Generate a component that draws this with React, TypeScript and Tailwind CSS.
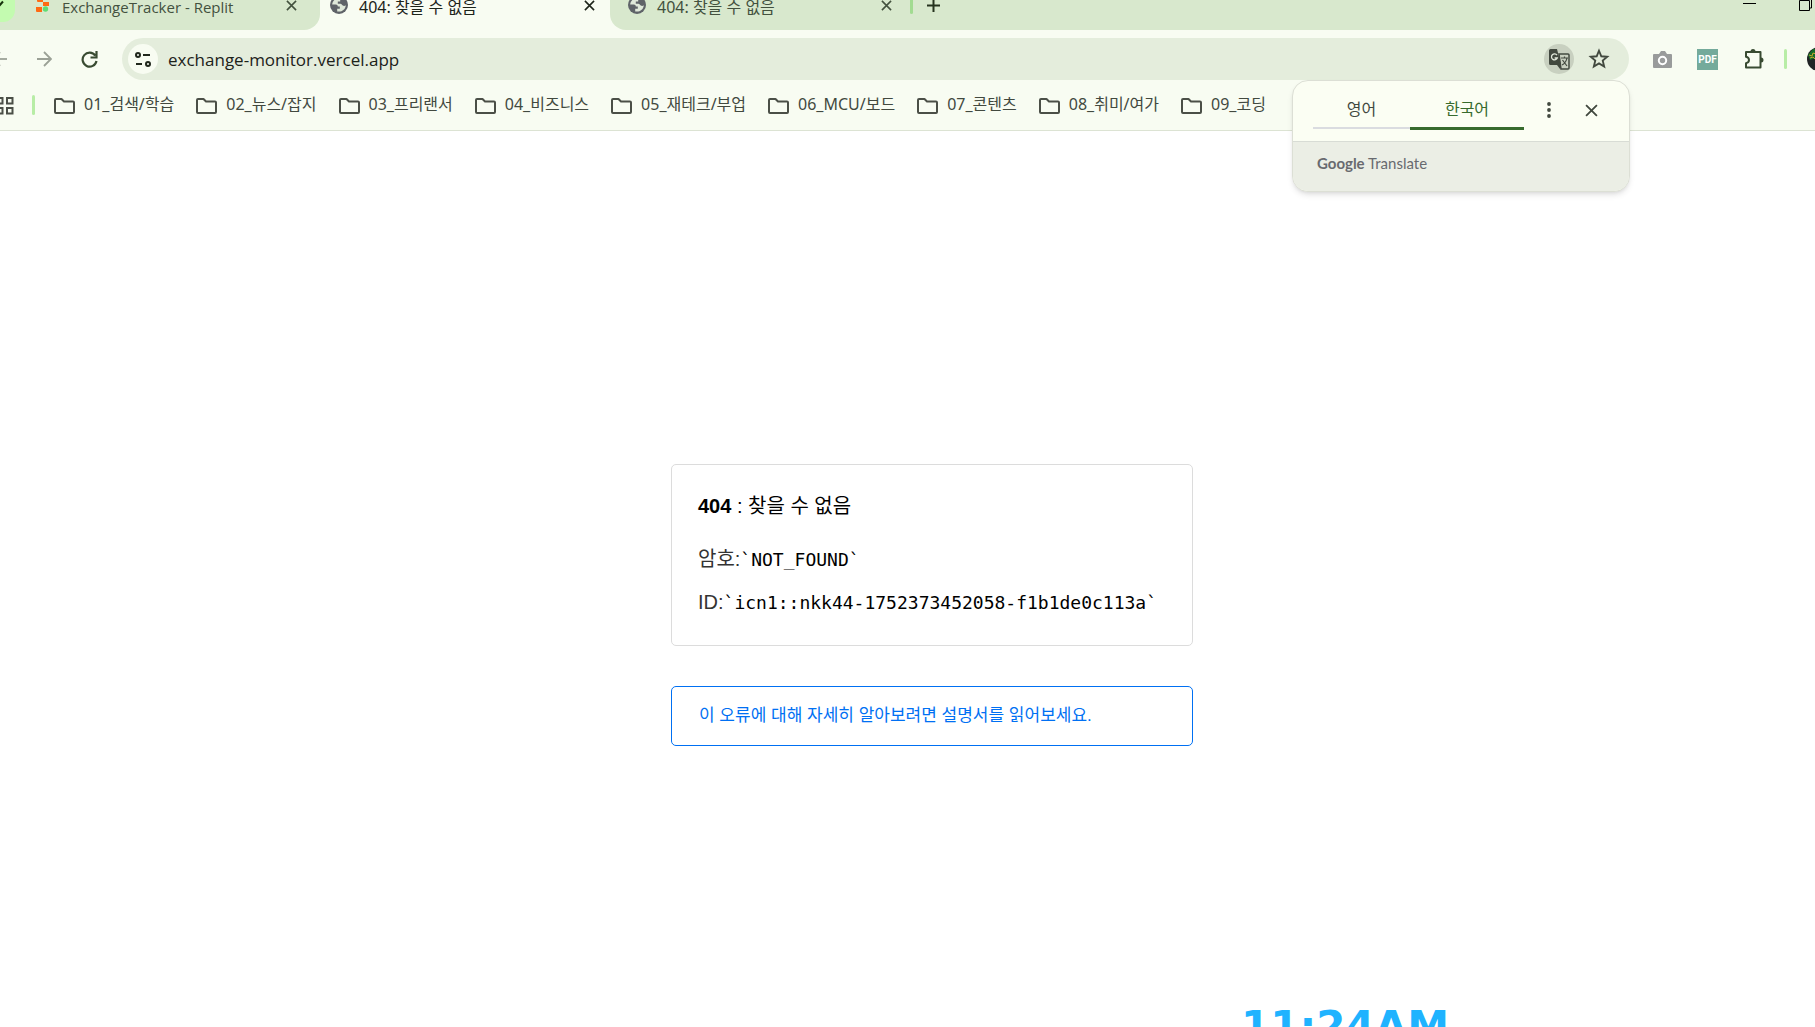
import React from 'react';

const bookmarks = [
  '01_검색/학습',
  '02_뉴스/잡지',
  '03_프리랜서',
  '04_비즈니스',
  '05_재테크/부업',
  '06_MCU/보드',
  '07_콘텐츠',
  '08_취미/여가',
  '09_코딩',
];

function Cross({ className }: { className: string }) {
  return (
    <svg className={className} viewBox="0 0 12 12" fill="none" stroke="currentColor" strokeWidth="1.7">
      <path d="M1 1l10 10M11 1L1 11" />
    </svg>
  );
}

function Globe() {
  return (
    <svg className="size-[18px] shrink-0" viewBox="0 0 18 18">
      <circle cx="9" cy="9" r="9" fill="#5f6368" />
      <path d="M8 2.2c-3 .4-5.6 3-5.8 6.2h3.6c1.6 0 2 1 2 2.2h2v2.2H7.2v2.6c4.4 1 8.4-2 8.6-6.2-.8.8-2 1-3 .4-1-.6-1-1.8-2.4-1.8H7.8V5.4h2.400V3.200z" fill="#dfe8d9" />
    </svg>
  );
}

function Replit() {
  return (
    <svg className="mb-px size-4 shrink-0" viewBox="0 0 16 16">
      <path d="M2 0h6v5H3a1 1 0 0 1-1-1zM8 5h6v4H8zM1 10h6v5H2a1 1 0 0 1-1-1z" fill="#ff6a13" />
      <circle cx="10.500" cy="12" r="2.700" fill="#5fdd74" />
    </svg>
  );
}

function Folder() {
  return (
    <svg className="h-4 w-[21px] shrink-0" viewBox="0 0 21 16" fill="none" stroke="#4b4f47" strokeWidth="2" strokeLinejoin="round">
      <path d="M2 1h5.500l2.500 2.500H19a1 1 0 0 1 1 1V14a1 1 0 0 1-1 1H2a1 1 0 0 1-1-1V2a1 1 0 0 1 1-1z" />
    </svg>
  );
}

function TabStrip() {
  return (
    <header className="flex h-[30px] shrink-0 overflow-hidden bg-[#f8fcf2] text-base leading-[14px] text-[#43513e]">
      <div className="flex w-[320px] rounded-br-2xl bg-[#d8e8cd]">
        <button aria-label="탭 검색" className="flex h-[22px] w-[15px] items-start rounded-br-xl bg-[#c3fbb0]">
          <svg className="size-2" viewBox="0 0 8 8" fill="none" stroke="#16340c" strokeWidth="2"><path d="M-2 5L-1 6L3 1.500" /></svg>
        </button>
        <div className="ml-5 mr-[23px] flex h-[14px] flex-1 items-end">
          <Replit />
          <span className="ml-[11px] flex-1 whitespace-nowrap font-['Open_Sans',sans-serif] text-[15px]">ExchangeTracker - Replit</span>
          <button aria-label="탭 닫기"><Cross className="mb-[3px] size-[11px]" /></button>
        </div>
      </div>
      <div className="flex h-[14px] w-[290px] items-end pl-[10px] pr-[15px] text-[#1d241a]">
        <Globe />
        <span className="ml-[11px] flex-1 whitespace-nowrap">404: 찾을 수 없음</span>
        <button aria-label="탭 닫기"><Cross className="mb-[3px] size-[11px]" /></button>
      </div>
      <div className="flex flex-1 rounded-bl-2xl bg-[#d8e8cd] pl-[18px]">
        <div className="flex h-[14px] w-[264px] items-end">
          <Globe />
          <span className="ml-[11px] flex-1 whitespace-nowrap">404: 찾을 수 없음</span>
          <button aria-label="탭 닫기"><Cross className="mb-[3px] size-[11px]" /></button>
        </div>
        <span className="ml-[18px] h-[14px] w-[3px] rounded-b bg-[#a2db91]" />
        <button aria-label="새 탭" className="ml-[14px] h-3">
          <svg className="size-[13px]" viewBox="0 0 13 13" stroke="#26331f" strokeWidth="2"><path d="M6.500 0v12M0 5.500h13" /></svg>
        </button>
        <div className="ml-auto flex h-3 gap-[43px] pr-[3px]">
          <button aria-label="최소화"><svg className="h-3 w-[13px]" viewBox="0 0 13 12"><path d="M0 3.500h13" stroke="#000" /></svg></button>
          <button aria-label="창 복원"><svg className="h-3 w-[13px]" viewBox="0 0 13 12" fill="none" stroke="#000"><path d="M.5.5h10v10H.5zM12.500-1v9h-2" /></svg></button>
        </div>
      </div>
    </header>
  );
}

function Toolbar() {
  return (
    <div className="flex h-[58px] shrink-0 items-center bg-[#f8fcf2] text-[#42493f]">
      <button aria-label="뒤로" className="w-2 overflow-hidden">
        <svg className="ml-[-8px] size-4" viewBox="0 0 16 16" fill="none" stroke="#a5aba0" strokeWidth="2"><path d="M15 8H1M8 1L1 8l7 7" /></svg>
      </button>
      <button aria-label="앞으로" className="ml-[28px]">
        <svg className="size-4" viewBox="0 0 16 16" fill="none" stroke="#9ba196" strokeWidth="1.800"><path d="M1 8h14M8 1l7 7-7 7" /></svg>
      </button>
      <button aria-label="새로고침" className="ml-[29px]">
        <svg className="size-[17px]" viewBox="0 0 17 17" fill="none" stroke="#394b32" strokeWidth="2.200"><path d="M14.300 4.500A7 7 0 1 0 15.500 10M15.500 0v6.500H9.500" /></svg>
      </button>
      <div className="ml-[24px] flex h-[42px] flex-1 items-center rounded-full bg-[#e4eddc] px-[6px]">
        <button aria-label="사이트 정보" className="flex size-[30px] items-center justify-center rounded-full bg-[#f8fcf2]">
          <svg className="h-[15px] w-4" viewBox="0 0 16 15" fill="none" stroke="#20271c" strokeWidth="2"><circle cx="3" cy="3" r="2" /><path d="M8 3h7M1 12h6" /><circle cx="13" cy="12" r="2" /></svg>
        </button>
        <input aria-label="주소창" defaultValue="exchange-monitor.vercel.app" className="ml-[10px] min-w-0 flex-1 bg-transparent pt-0.5 font-['Open_Sans',sans-serif] text-[17px] text-[#1c221a] outline-none" />
        <button aria-label="번역" className="flex size-[30px] items-center justify-center rounded-full bg-[#c8d0c0]">
          <svg className="size-[21px]" viewBox="0 0 21 21" fill="none">
            <path d="M10 5h9a1 1 0 0 1 1 1v13a1 1 0 0 1-1 1h-7z" stroke="#42493f" strokeWidth="1.500" />
            <path d="M1.500 0H8l4 16H1.500A1.500 1.500 0 0 1 0 14.500v-13A1.500 1.500 0 0 1 1.500 0zM8 16h4l-1 4z" fill="#42493f" />
            <path d="M8 6.200A3 3 0 1 0 8.300 9H5.600" stroke="#e1e8da" strokeWidth="1.300" />
            <path d="M12 9h7M15.500 7.500V9M18 9q-1 5-5 7M13.500 11l4.500 6" stroke="#42493f" strokeWidth="1.200" />
          </svg>
        </button>
        <button aria-label="북마크" className="ml-[14px] mr-[13px]">
          <svg className="size-[22px]" viewBox="0 0 20 20" fill="none" stroke="#42493f" strokeWidth="1.700"><path d="M10 2.500l2.100 5 5.400.5-4.100 3.500 1.300 5.300L10 14l-4.700 2.800 1.300-5.300L2.500 8l5.400-.5z" /></svg>
        </button>
      </div>
      <button aria-label="캡처" className="ml-[24px]">
        <svg className="h-[17px] w-[19px]" viewBox="0 0 19 17"><path d="M1 3h5l2-3h4l2 3h4a1 1 0 0 1 1 1v12a1 1 0 0 1-1 1H1a1 1 0 0 1-1-1V4a1 1 0 0 1 1-1z" fill="#999b9b" /><circle cx="9.500" cy="9.500" r="3.700" fill="#9a9c9c" stroke="#fff" strokeWidth="2" /></svg>
      </button>
      <button className="ml-[25px] size-[21px] bg-[#74aa9b] font-['Roboto',sans-serif] text-[10px] font-bold text-white">PDF</button>
      <button aria-label="확장 프로그램" className="ml-[25px]">
        <svg className="h-[21px] w-[22px]" viewBox="0 0 22 21"><path d="M3 3h14.500v15.500H3v-4.300q3-.7 3-3.200T3 7.800z" fill="none" stroke="#394b32" strokeWidth="2" strokeLinejoin="round" /><path d="M7.500 2.500a2.500 2.500 0 0 1 5 0zM18 8.500a2.500 2.500 0 0 1 0 5z" fill="#394b32" /></svg>
      </button>
      <span className="ml-[19px] h-5 w-[3px] rounded bg-[#b8eda6]" />
      <button aria-label="프로필" className="ml-5 w-2 overflow-hidden">
        <svg className="size-6" viewBox="0 0 24 24"><circle cx="12" cy="12" r="12" fill="#202325" /><path d="M1 8l5-6h4v9l-7 2z" fill="#176b28" /><path d="M2 8l3 1 1-3 3 1M3 11l3-1 2 2" stroke="#c3a52c" fill="none" /></svg>
      </button>
    </div>
  );
}

function Bookmarks() {
  return (
    <nav className="flex h-[43px] shrink-0 items-start border-b border-[#dce3d3] bg-[#f8fcf2] pt-[6px] text-base leading-5 text-[#42493f]">
      <button aria-label="앱" className="mt-[3px] w-[14px] overflow-hidden">
        <svg className="ml-[-4px] size-[18px]" viewBox="0 0 18 18" fill="none" stroke="#4b4f47" strokeWidth="2"><path d="M1 1h5.500v5.500H1zM11 1h5.500v5.500H11zM1 11h5.500v5.500H1zM11 11h5.500v5.500H11z" /></svg>
      </button>
      <span className="ml-[18px] mt-[1px] h-5 w-[3px] rounded bg-[#b8eda6]" />
      <div className="ml-[19px] flex gap-[22px]">
        {bookmarks.map((name) => (
          <a key={name} href="#" className="flex items-start gap-[9px] whitespace-nowrap"><span className="mt-1"><Folder /></span>{name}</a>
        ))}
      </div>
    </nav>
  );
}

function TranslatePopup() {
  return (
    <section className="absolute right-[185px] top-[80px] w-[338px] overflow-hidden rounded-2xl border border-[#dcdfd5] bg-[#fbfef3] text-base text-[#42493f] shadow-md">
      <div className="flex h-[61px] items-start border-b border-[#d8dcd5] pl-5">
        <button className="h-[48px] w-[97px] border-b-2 border-[#dadce0] pt-2.5">영어</button>
        <button className="h-[49px] w-[114px] border-b-3 border-[#376b2d] pt-2.5 text-[#376b2d]">한국어</button>
        <button aria-label="옵션" className="ml-[23px] mt-[21px]"><svg className="h-4 w-1" viewBox="0 0 4 16" fill="#42493f"><circle cx="2" cy="2" r="1.900" /><circle cx="2" cy="8" r="1.900" /><circle cx="2" cy="14" r="1.900" /></svg></button>
        <button aria-label="닫기" className="ml-[34px] mt-[23px]"><Cross className="size-[13px]" /></button>
      </div>
      <p className="h-[49px] bg-[#ebeee5] pl-[24px] pt-[9px] font-['Lato',sans-serif] text-[15px] leading-6 text-[#686a6f]"><b>Google</b> Translate</p>
    </section>
  );
}

export default function App() {
  return (
    <div className="relative flex h-screen flex-col overflow-hidden bg-white font-['Noto_Sans','Noto_Sans_CJK_KR',sans-serif]">
      <TabStrip />
      <Toolbar />
      <Bookmarks />
      <main className="flex flex-1 justify-center pl-[49px] pt-[333px] font-['Liberation_Sans','Noto_Sans_CJK_KR',sans-serif]">
        <div className="w-[522px]">
          <section className="rounded-[5px] border border-[#dcdcdc] px-[26px] pb-[21px] pt-[25px] text-xl leading-8">
            <h1><b>404</b> : 찾을 수 없음</h1>
            <p className="mt-[16px] h-[43px] leading-[43px] text-[#333]">암호:<code className="font-['DejaVu_Sans_Mono',monospace] text-lg text-black">`NOT_FOUND`</code></p>
            <p className="h-[43px] whitespace-nowrap leading-[43px] text-[#333]">ID:<code className="font-['DejaVu_Sans_Mono',monospace] text-lg text-black">`icn1::nkk44-1752373452058-f1b1de0c113a`</code></p>
          </section>
          <a href="#" className="mt-10 block rounded-[5px] border border-[#0070f3] px-[27px] pb-4 pt-4 text-[17px] leading-[26px] text-[#0070f3]">이 오류에 대해 자세히 알아보려면 설명서를 읽어보세요.</a>
        </div>
      </main>
      <TranslatePopup />
      <time className="absolute right-[366px] top-[1003px] font-['DejaVu_Sans',sans-serif] text-[42px] font-bold leading-[48px] text-[#1fb3ff]">11:24AM</time>
    </div>
  );
}
